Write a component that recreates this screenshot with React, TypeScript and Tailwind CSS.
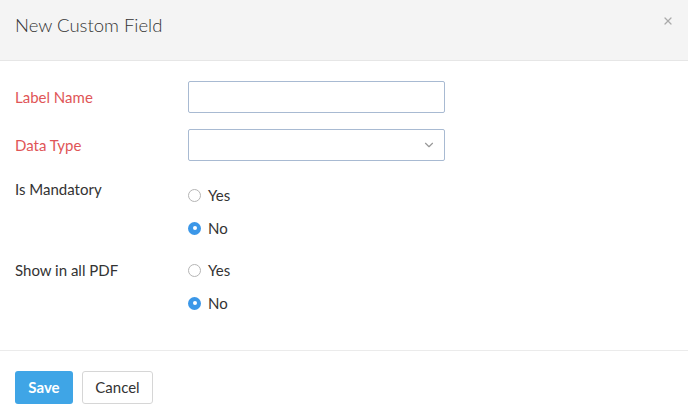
import { ChevronDown, X } from "lucide-react";

function Radio({ label, checked }: { label: string; checked?: boolean }) {
  return (
    <label className="flex items-center h-[20px] gap-[7px] text-[15px] text-[#333]">
      {checked ? (
        <span className="w-[13px] h-[13px] rounded-full bg-[#3b97e8] flex items-center justify-center">
          <span className="w-[4px] h-[4px] rounded-full bg-white" />
        </span>
      ) : (
        <span className="w-[13px] h-[13px] rounded-full border border-[#b5b5b5] bg-white" />
      )}
      {label}
    </label>
  );
}

export default function App() {
  return (
    <div
      className="w-[688px] h-[419px] bg-white flex flex-col"
      style={{ fontFamily: "Lato, 'Open Sans', sans-serif" }}
    >
      {/* Header */}
      <div className="h-[61px] shrink-0 bg-[#f4f4f4] border-b border-[#e6e6e6] flex items-center justify-between pl-[15px] pr-[14px]">
        <h2 className="text-[18.5px] text-[#333] font-light mb-[8px]">New Custom Field</h2>
        <X size={12} strokeWidth={2.5} className="text-[#aaa] mb-[18px]" />
      </div>

      {/* Body */}
      <div className="flex-1 flex flex-col pt-[20px] px-[15px]">
        <div className="flex items-center h-[32px]">
          <span className="w-[173px] text-[15px] text-[#e05557]">Label Name</span>
          <input className="w-[257px] h-[32px] border border-[#a8bad2] rounded-[2px] outline-none px-2" />
        </div>
        <div className="flex items-center h-[32px] mt-[16px]">
          <span className="w-[173px] text-[15px] text-[#e05557]">Data Type</span>
          <div className="w-[257px] h-[32px] border border-[#a8bad2] rounded-[2px] flex items-center justify-end pr-[8px]">
            <ChevronDown size={14} strokeWidth={2} className="text-[#999]" />
          </div>
        </div>

        <div className="flex mt-[18px]">
          <span className="w-[173px] text-[15px] text-[#333] leading-[20px]">Is Mandatory</span>
          <div className="flex flex-col gap-[13px] mt-[6px]">
            <Radio label="Yes" />
            <Radio label="No" checked />
          </div>
        </div>

        <div className="flex mt-[22px]">
          <span className="w-[173px] text-[15px] text-[#333] leading-[20px]">Show in all PDF</span>
          <div className="flex flex-col gap-[13px]">
            <Radio label="Yes" />
            <Radio label="No" checked />
          </div>
        </div>
      </div>

      {/* Footer */}
      <div className="h-[69px] shrink-0 border-t border-[#ebebeb] flex items-center gap-[9px] px-[15px] pt-[4px]">
        <button className="w-[58px] h-[33px] rounded-[3px] bg-[#3fa5e6] text-white text-[15px] font-bold">
          Save
        </button>
        <button className="w-[71px] h-[33px] rounded-[3px] border border-[#d6d6d6] bg-white text-[#333] text-[15px]">
          Cancel
        </button>
      </div>
    </div>
  );
}
